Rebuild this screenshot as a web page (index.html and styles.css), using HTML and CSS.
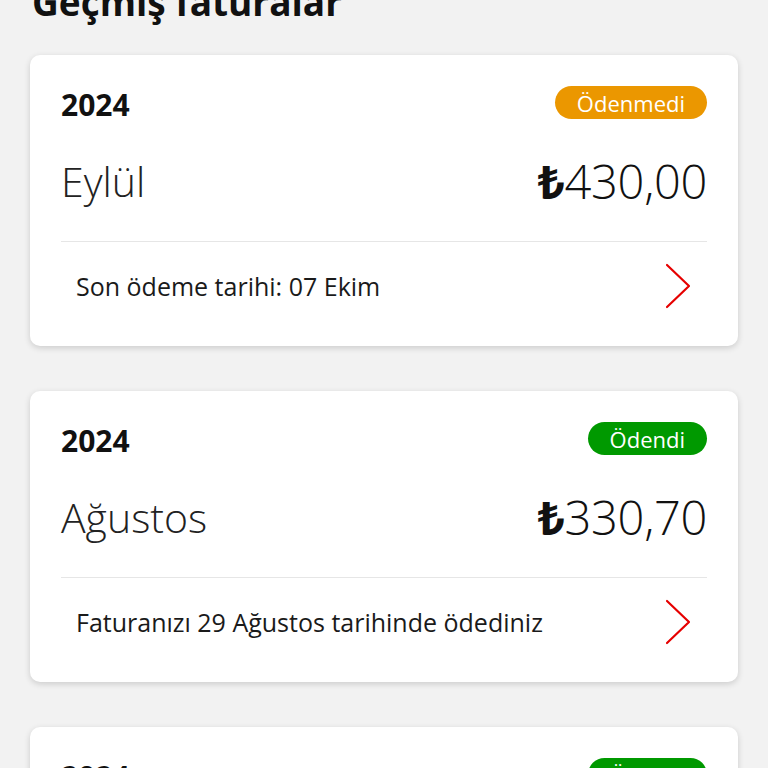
FILE: index.html
```html
<!DOCTYPE html>
<html lang="tr">
<head>
<meta charset="utf-8">
<link rel="stylesheet" href="styles.css">
</head>
<body>
<main class="page">
  <h1 class="title">Geçmiş faturalar</h1>
  <section class="card">
    <div class="head">
      <span class="year">2024</span>
      <span class="badge badge-unpaid">Ödenmedi</span>
    </div>
    <div class="main-row">
      <span class="month">Eylül</span>
      <span class="amount"><b class="cur">₺</b>430,00</span>
    </div>
    <div class="foot">
      <span class="note">Son ödeme tarihi: 07 Ekim</span>
      <svg class="chev" width="26" height="46" viewBox="0 0 26 46"><path d="M2 2 L24 23 L2 44" fill="none" stroke="#e60000" stroke-width="2.2" stroke-linecap="round" stroke-linejoin="round"/></svg>
    </div>
  </section>
  <section class="card">
    <div class="head">
      <span class="year">2024</span>
      <span class="badge badge-paid">Ödendi</span>
    </div>
    <div class="main-row">
      <span class="month">Ağustos</span>
      <span class="amount"><b class="cur">₺</b>330,70</span>
    </div>
    <div class="foot">
      <span class="note">Faturanızı 29 Ağustos tarihinde ödediniz</span>
      <svg class="chev" width="26" height="46" viewBox="0 0 26 46"><path d="M2 2 L24 23 L2 44" fill="none" stroke="#e60000" stroke-width="2.2" stroke-linecap="round" stroke-linejoin="round"/></svg>
    </div>
  </section>
  <section class="card">
    <div class="head">
      <span class="year">2024</span>
      <span class="badge badge-paid">Ödendi</span>
    </div>
    <div class="main-row">
      <span class="month">Temmuz</span>
      <span class="amount"><b class="cur">₺</b>330,70</span>
    </div>
  </section>
</main>
</body>
</html>
```
FILE: styles.css
```css
* { box-sizing: border-box; }
html, body { margin: 0; padding: 0; }
body {
  background: #f2f2f2;
  font-family: "Open Sans", "Noto Sans", sans-serif;
  color: #1a1a1a;
  overflow: hidden;
  height: 768px;
}
.page {
  padding: 0 30px;
}
.title {
  margin: -20px 2px 31px;
  font-size: 37px;
  line-height: 44px;
  font-weight: 700;
  color: #111;
}
.card {
  background: #fff;
  border-radius: 10px;
  box-shadow: 0 2px 6px rgba(0,0,0,0.16);
  padding: 31px 31px 16px;
  margin-bottom: 45px;
}
.head {
  display: flex;
  justify-content: space-between;
  align-items: center;
  height: 33px;
}
.year {
  font-size: 30px;
  font-weight: 700;
  color: #111;
  position: relative;
  top: 2px;
}
.badge {
  display: inline-flex;
  align-items: center;
  height: 33px;
  padding: 0 22px;
  border-radius: 17px;
  color: #fff;
  font-size: 22px;
  font-weight: 400;
}
.badge-unpaid { background: #eb9700; }
.badge-paid { background: #009900; }
.main-row {
  display: flex;
  justify-content: space-between;
  align-items: center;
  margin-top: 22px;
  border-bottom: 1px solid #e6e6e6;
  height: 101px;
  padding-bottom: 21px;
}
.month {
  font-size: 41px;
  font-weight: 300;
  color: #222;
}
.amount {
  font-size: 47px;
  font-weight: 300;
  color: #111;
  letter-spacing: -0.3px;
}
.cur { font-weight: 700; }
.foot {
  display: flex;
  justify-content: space-between;
  align-items: center;
  height: 88px;
  padding: 0 16px 0 15px;
}
.note {
  font-size: 25px;
  color: #1a1a1a;
}
.chev { display: block; }
```
